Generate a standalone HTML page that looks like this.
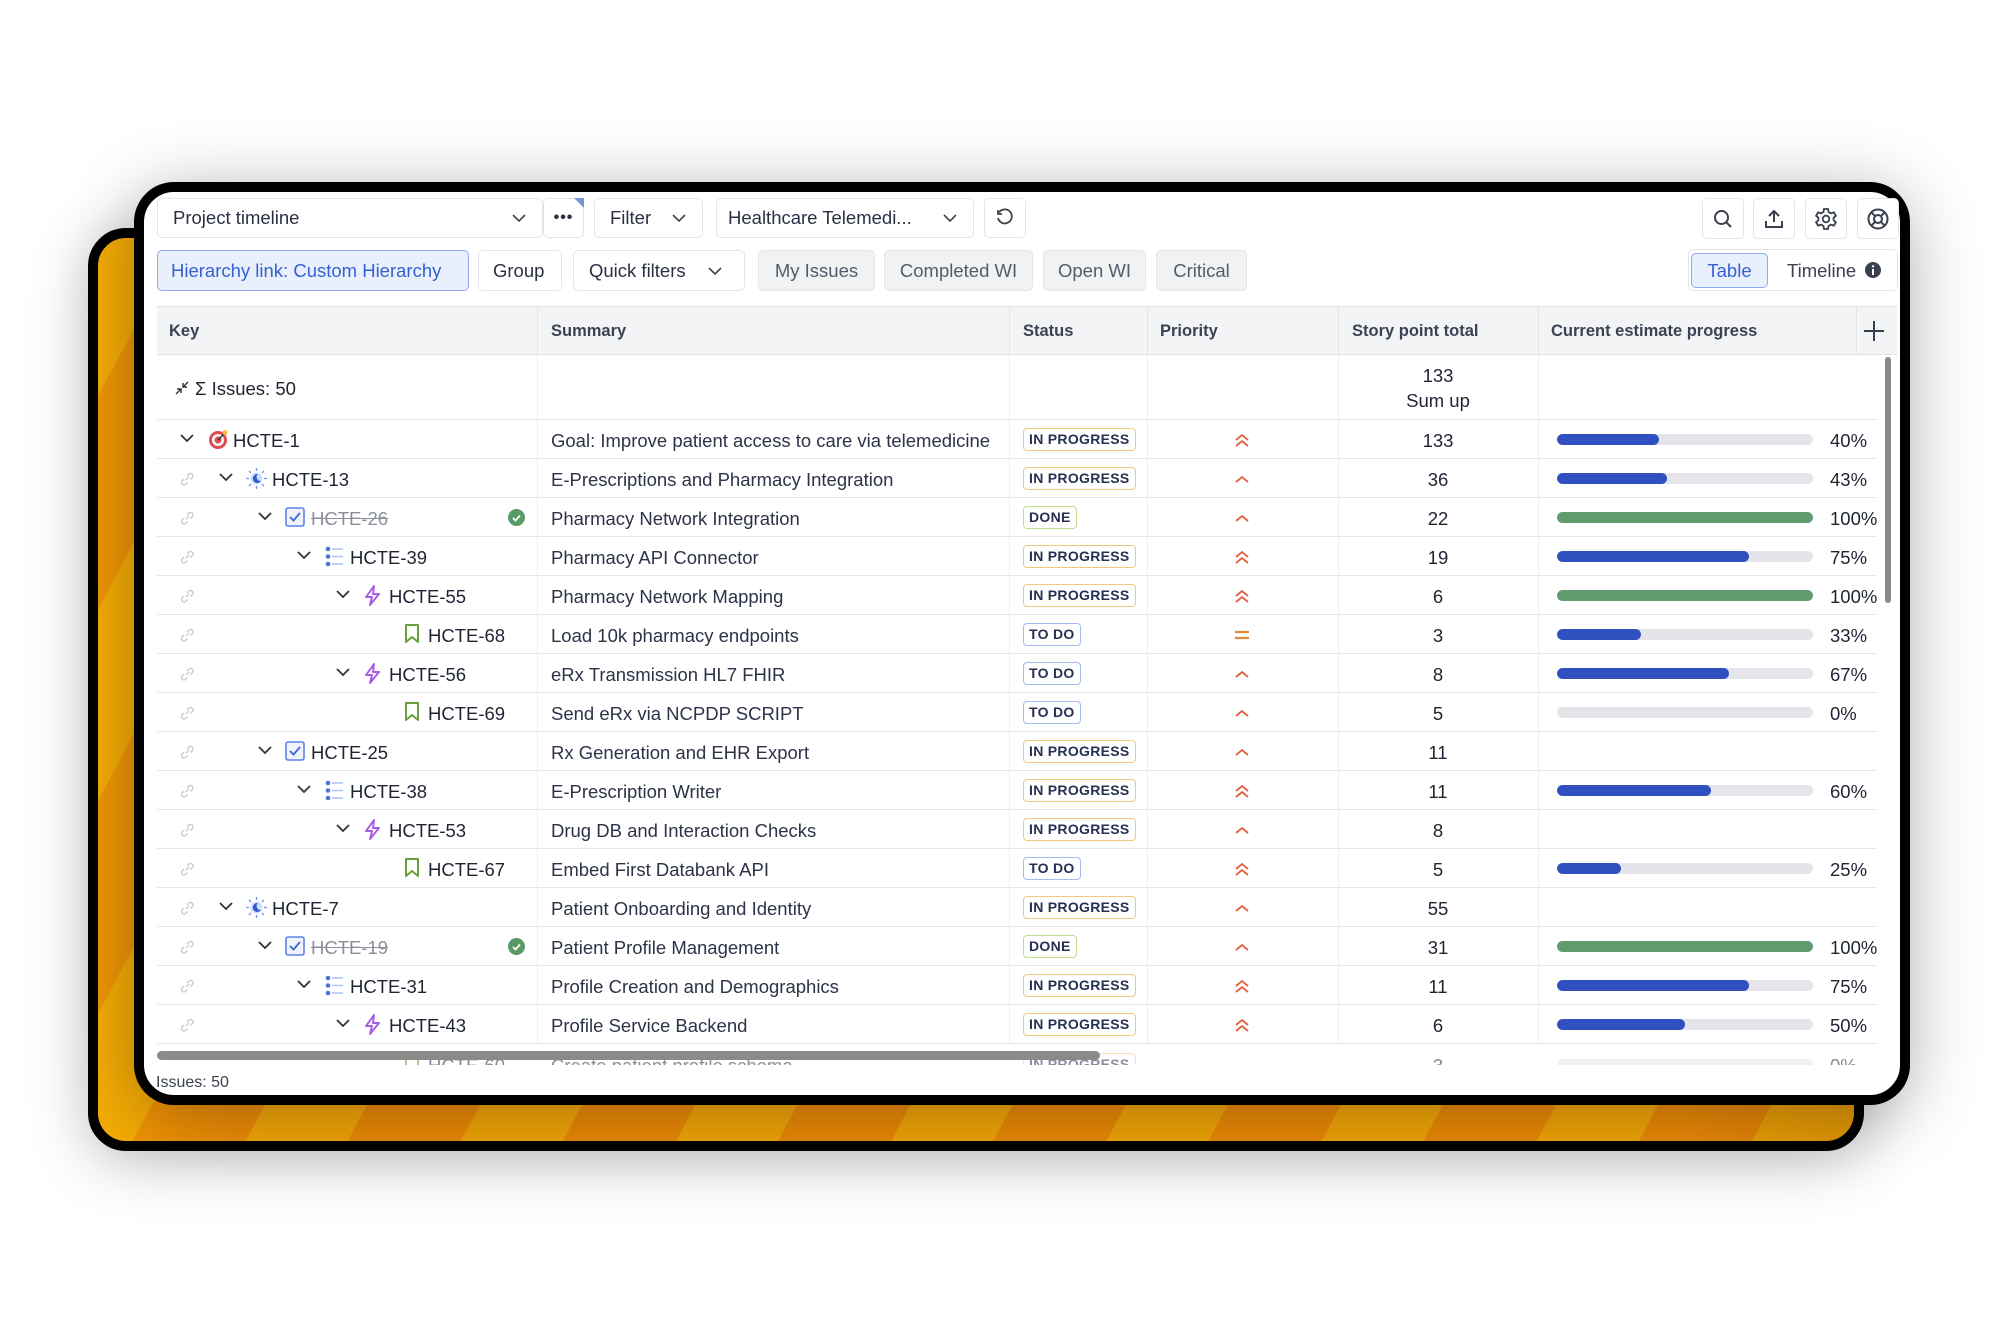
<!DOCTYPE html>
<html><head><meta charset="utf-8"><style>
*{box-sizing:border-box;margin:0;padding:0}
body{width:2000px;height:1334px;background:#fff;position:relative;overflow:hidden;font-family:"Liberation Sans",sans-serif;color:#1f2433}
.abs{position:absolute}
.back{left:88px;top:228px;width:1776px;height:923px;border:10px solid #000;border-radius:38px;overflow:hidden;
background:repeating-linear-gradient(-62deg,#f2a606 0 90px,#ec8a06 90px 190px);box-shadow:0 10px 60px rgba(0,0,0,.25)}
.back:after{content:"";position:absolute;inset:0;background:linear-gradient(90deg,rgba(255,200,0,.2),rgba(0,0,0,0) 10%,rgba(0,0,0,0) 90%,rgba(120,60,0,.15))}
.front{left:134px;top:182px;width:1776px;height:923px;border:10px solid #000;border-radius:40px;background:#fff;overflow:hidden;box-shadow:0 10px 70px rgba(0,0,0,.3)}
.btn{position:absolute;border:1px solid #e3e5ea;border-radius:5px;background:#fff;font-size:18.5px;color:#2a3043;display:flex;align-items:center;padding-left:15px}
.gbtn{background:#f1f2f4;color:#545b6b;justify-content:center;padding:0}
.hdr{position:absolute;left:157px;top:306px;width:1740px;height:49px;background:#f3f4f6;border-top:1px solid #e4e6ea;border-bottom:1px solid #e0e2e6;font-size:16.5px;font-weight:bold;color:#3b4254}
.hdr span{position:absolute;top:15px}
.vl{position:absolute;top:0;bottom:0;width:1px;background:#e3e5e9}
.r{position:absolute;left:157px;width:1720px;height:39px;border-bottom:1.5px solid #e6e7eb;font-size:18.5px}
.r>*{position:absolute}
.lk{left:22px;top:12px}
.cv{top:14px}
.ic{top:9px}
.k{top:10px;color:#1f2433}
.st{text-decoration:line-through;color:#8a8f9a}
.s{left:394px;top:10px;color:#2d3348}
.b{left:866px;top:8px;height:23px;border:1.5px solid;border-radius:4px;font-size:14px;font-weight:bold;color:#263052;padding:0 5px;line-height:20px;letter-spacing:.3px}
.ip{border-color:#f3c77c}.td{border-color:#a5bbef}.dn{border-color:#bcdc92}
.p{left:1077px;top:12px}
.n{left:1231px;width:100px;text-align:center;top:10px}
.bar{left:1400px;top:14px;width:256px;height:11px;border-radius:6px;background:#e4e4ea;overflow:hidden}
.bar i{display:block;height:100%;border-radius:6px;background:#3050bf}
.bar i.g{background:#619a6f}
.pc{left:1673px;top:10px}
.vlr{position:absolute;top:0;height:39px;width:1px;background:#eceef1}
</style></head><body>
<div class="abs back"></div>
<div class="abs front"></div>

<div class="btn" style="left:157px;top:198px;width:386px;height:40px">Project timeline
<svg class="abs" style="right:16px;top:15px" width="14" height="9"><path d="M1 1l6 6 6-6" fill="none" stroke="#444" stroke-width="1.6"/></svg></div>
<div class="btn" style="left:543px;top:198px;width:41px;height:40px;padding:0;justify-content:center;font-weight:bold;letter-spacing:1px;font-size:16px">•••
<svg class="abs" style="right:-1px;top:-1px" width="10" height="10"><path d="M0 0h10v10z" fill="#7a94d8"/></svg></div>
<div class="btn" style="left:594px;top:198px;width:109px;height:40px">Filter
<svg class="abs" style="right:16px;top:15px" width="14" height="9"><path d="M1 1l6 6 6-6" fill="none" stroke="#444" stroke-width="1.6"/></svg></div>
<div class="btn" style="left:716px;top:198px;width:258px;height:40px;padding-left:11px">Healthcare Telemedi...
<svg class="abs" style="right:16px;top:15px" width="14" height="9"><path d="M1 1l6 6 6-6" fill="none" stroke="#444" stroke-width="1.6"/></svg></div>
<div class="btn" style="left:984px;top:198px;width:42px;height:40px;padding:0;justify-content:center">
<svg width="20" height="20" viewBox="0 0 20 20"><path d="M4 4.5A7 7 0 1 1 3 10" fill="none" stroke="#444" stroke-width="1.8"/><path d="M3 2v4h4" fill="none" stroke="#444" stroke-width="1.8"/></svg></div>

<div class="btn" style="left:1702px;top:198px;width:42px;height:41px;padding:0;justify-content:center"><svg width="22" height="22"><circle cx="9.5" cy="9.5" r="6.5" fill="none" stroke="#3a4050" stroke-width="2"/><path d="M14 14l5 5" stroke="#3a4050" stroke-width="2"/></svg></div>
<div class="btn" style="left:1753px;top:198px;width:42px;height:41px;padding:0;justify-content:center"><svg width="22" height="22"><path d="M11 14V3M6 8l5-5 5 5M3 13v6h16v-6" fill="none" stroke="#3a4050" stroke-width="2"/></svg></div>
<div class="btn" style="left:1805px;top:198px;width:42px;height:41px;padding:0;justify-content:center"><svg width="24" height="24" viewBox="0 0 24 24"><path d="M10 2h4l.6 3 2.4 1.4 2.9-1 2 3.4-2.3 2v2.4l2.3 2-2 3.4-2.9-1L14.6 19 14 22h-4l-.6-3L7 17.6l-2.9 1-2-3.4 2.3-2v-2.4l-2.3-2 2-3.4 2.9 1L9.4 5z" fill="none" stroke="#3a4050" stroke-width="1.8"/><circle cx="12" cy="12" r="3.3" fill="none" stroke="#3a4050" stroke-width="1.8"/></svg></div>
<div class="btn" style="left:1857px;top:198px;width:42px;height:41px;padding:0;justify-content:center"><svg width="24" height="24" viewBox="0 0 24 24"><circle cx="12" cy="12" r="9.5" fill="none" stroke="#3a4050" stroke-width="2"/><circle cx="12" cy="12" r="4" fill="none" stroke="#3a4050" stroke-width="2"/><path d="M5.3 5.3l3.9 3.9M18.7 5.3l-3.9 3.9M5.3 18.7l3.9-3.9M18.7 18.7l-3.9-3.9" stroke="#3a4050" stroke-width="2"/></svg></div>

<div class="btn" style="left:157px;top:250px;width:312px;height:41px;background:#e9f0fd;border-color:#8eaaf0;color:#3560d0;padding-left:13px">Hierarchy link: Custom Hierarchy</div>
<div class="btn" style="left:478px;top:250px;width:84px;height:41px;padding-left:14px">Group</div>
<div class="btn" style="left:573px;top:250px;width:172px;height:41px;padding-left:15px">Quick filters
<svg class="abs" style="right:22px;top:16px" width="14" height="9"><path d="M1 1l6 6 6-6" fill="none" stroke="#444" stroke-width="1.6"/></svg></div>
<div class="btn gbtn" style="left:758px;top:250px;width:117px;height:41px">My Issues</div>
<div class="btn gbtn" style="left:884px;top:250px;width:149px;height:41px">Completed WI</div>
<div class="btn gbtn" style="left:1043px;top:250px;width:103px;height:41px">Open WI</div>
<div class="btn gbtn" style="left:1156px;top:250px;width:91px;height:41px">Critical</div>
<div class="btn" style="left:1688px;top:249px;width:210px;height:42px;padding:0"></div>
<div class="btn" style="left:1691px;top:253px;width:77px;height:35px;background:#e9f0fd;border-color:#8eaaf0;color:#3560d0;padding:0;justify-content:center">Table</div>
<div class="abs" style="left:1787px;top:260px;font-size:18.5px;color:#3a4050">Timeline</div>
<svg class="abs" style="left:1865px;top:262px" width="16" height="16"><circle cx="8" cy="8" r="8" fill="#3a4050"/><rect x="7" y="7" width="2" height="6" fill="#fff"/><circle cx="8" cy="4.3" r="1.2" fill="#fff"/></svg>

<div class="hdr">
<span style="left:12px">Key</span><span style="left:394px">Summary</span><span style="left:866px">Status</span><span style="left:1003px">Priority</span><span style="left:1195px">Story point total</span><span style="left:1394px">Current estimate progress</span>
<div class="vl" style="left:380px"></div><div class="vl" style="left:852px"></div><div class="vl" style="left:990px"></div><div class="vl" style="left:1181px"></div><div class="vl" style="left:1381px"></div><div class="vl" style="left:1699px"></div>
<svg class="abs" style="left:1705px;top:12px" width="24" height="24"><path d="M12 2v20M2 12h20" stroke="#3a4050" stroke-width="2"/></svg>
</div>

<div class="r" style="top:355px;height:65px">
<svg style="left:18px;top:26px" width="14" height="14"><path d="M1 13l5-5M2 8h4v4M13 1L8 6M8 2v4h4" fill="none" stroke="#333" stroke-width="1.4"/></svg>
<span style="left:38px;top:23px">Σ Issues: 50</span>
<span style="left:1231px;width:100px;text-align:center;top:10px">133</span>
<span style="left:1231px;width:100px;text-align:center;top:35px">Sum up</span>
<div class="vlr" style="left:380px;height:65px"></div><div class="vlr" style="left:852px;height:65px"></div><div class="vlr" style="left:990px;height:65px"></div><div class="vlr" style="left:1181px;height:65px"></div><div class="vlr" style="left:1381px;height:65px"></div>
</div>

<div class="r" style="top:420px">
<div class="vlr" style="left:380px"></div><div class="vlr" style="left:852px"></div><div class="vlr" style="left:990px"></div><div class="vlr" style="left:1181px"></div><div class="vlr" style="left:1381px"></div>
<svg class="cv" style="left:23px" width="14" height="9"><path d="M1 1l6 6 6-6" fill="none" stroke="#333" stroke-width="1.8"/></svg>
<svg class="ic" style="left:51px" width="21" height="21"><circle cx="10" cy="11" r="9" fill="#e04a55"/><circle cx="10" cy="11" r="6" fill="#fff"/><circle cx="10" cy="11" r="3.5" fill="#e04a55"/><path d="M10 11l7-7" stroke="#333" stroke-width="1.5"/><circle cx="17" cy="3.5" r="2.5" fill="#f5c040"/></svg>
<span class="k" style="left:76px">HCTE-1</span>
<span class="s">Goal: Improve patient access to care via telemedicine</span>
<span class="b ip">IN PROGRESS</span>
<svg class="p" width="16" height="16"><path d="M2 8l6-5 6 5M2 14l6-5 6 5" fill="none" stroke="#e0603f" stroke-width="1.8"/></svg>
<span class="n">133</span><div class="bar"><i style="width:40%"></i></div><span class="pc">40%</span>
</div>

<div class="r" style="top:459px">
<div class="vlr" style="left:380px"></div><div class="vlr" style="left:852px"></div><div class="vlr" style="left:990px"></div><div class="vlr" style="left:1181px"></div><div class="vlr" style="left:1381px"></div>
<svg class="lk" width="16" height="16"><path d="M7 9l3-3M5 8l-2 2a2.5 2.5 0 0 0 3.5 3.5L8.5 11.5M8 5l2-2a2.5 2.5 0 0 1 3.5 3.5L11.5 8.5" fill="none" stroke="#c8cbd2" stroke-width="1.4"/></svg>
<svg class="cv" style="left:62px" width="14" height="9"><path d="M1 1l6 6 6-6" fill="none" stroke="#333" stroke-width="1.8"/></svg>
<svg class="ic" style="left:89px" width="21" height="21"><circle cx="10.5" cy="10.5" r="6" fill="#cfe0fb"/><path d="M12 6a4.5 4.5 0 1 0 3 7 4 4 0 0 1-3-7z" fill="#2f5bd0"/><g stroke="#6d94e6" stroke-width="1.3"><path d="M10.5 0v3M10.5 18v3M0 10.5h3M18 10.5h3M3 3l2 2M16 16l2 2M3 18l2-2M16 5l2-2"/></g></svg>
<span class="k" style="left:115px">HCTE-13</span>
<span class="s">E-Prescriptions and Pharmacy Integration</span>
<span class="b ip">IN PROGRESS</span>
<svg class="p" width="16" height="16"><path d="M2 11l6-5 6 5" fill="none" stroke="#e0603f" stroke-width="1.8"/></svg>
<span class="n">36</span><div class="bar"><i style="width:43%"></i></div><span class="pc">43%</span>
</div>

<div class="r" style="top:498px">
<div class="vlr" style="left:380px"></div><div class="vlr" style="left:852px"></div><div class="vlr" style="left:990px"></div><div class="vlr" style="left:1181px"></div><div class="vlr" style="left:1381px"></div>
<svg class="lk" width="16" height="16"><path d="M7 9l3-3M5 8l-2 2a2.5 2.5 0 0 0 3.5 3.5L8.5 11.5M8 5l2-2a2.5 2.5 0 0 1 3.5 3.5L11.5 8.5" fill="none" stroke="#c8cbd2" stroke-width="1.4"/></svg>
<svg class="cv" style="left:101px" width="14" height="9"><path d="M1 1l6 6 6-6" fill="none" stroke="#333" stroke-width="1.8"/></svg>
<svg class="ic" style="left:128px" width="20" height="20"><rect x="1" y="1" width="18" height="18" rx="2" fill="#eef3fd" stroke="#5b84e6" stroke-width="1.6"/><path d="M5 10l3.5 3.5L15 6" fill="none" stroke="#3c68d8" stroke-width="1.8"/></svg>
<span class="k st" style="left:154px">HCTE-26</span>
<svg style="left:351px;top:11px" width="17" height="17"><circle cx="8.5" cy="8.5" r="8.5" fill="#5a9a66"/><path d="M5 9l2.5 2.5L12 6.5" fill="none" stroke="#fff" stroke-width="1.8"/></svg>
<span class="s">Pharmacy Network Integration</span>
<span class="b dn">DONE</span>
<svg class="p" width="16" height="16"><path d="M2 11l6-5 6 5" fill="none" stroke="#e0603f" stroke-width="1.8"/></svg>
<span class="n">22</span><div class="bar"><i class="g" style="width:100%"></i></div><span class="pc">100%</span>
</div>

<div class="r" style="top:537px">
<div class="vlr" style="left:380px"></div><div class="vlr" style="left:852px"></div><div class="vlr" style="left:990px"></div><div class="vlr" style="left:1181px"></div><div class="vlr" style="left:1381px"></div>
<svg class="lk" width="16" height="16"><path d="M7 9l3-3M5 8l-2 2a2.5 2.5 0 0 0 3.5 3.5L8.5 11.5M8 5l2-2a2.5 2.5 0 0 1 3.5 3.5L11.5 8.5" fill="none" stroke="#c8cbd2" stroke-width="1.4"/></svg>
<svg class="cv" style="left:140px" width="14" height="9"><path d="M1 1l6 6 6-6" fill="none" stroke="#333" stroke-width="1.8"/></svg>
<svg class="ic" style="left:167px" width="20" height="21"><g fill="#4a74d8"><circle cx="4" cy="3" r="2.3"/><circle cx="4" cy="10.5" r="2.3"/><circle cx="4" cy="18" r="2.3"/></g><g stroke="#a9c2f2" stroke-width="1.6"><path d="M8 3h11M8 10.5h11M8 18h11"/></g></svg>
<span class="k" style="left:193px">HCTE-39</span>
<span class="s">Pharmacy API Connector</span>
<span class="b ip">IN PROGRESS</span>
<svg class="p" width="16" height="16"><path d="M2 8l6-5 6 5M2 14l6-5 6 5" fill="none" stroke="#e0603f" stroke-width="1.8"/></svg>
<span class="n">19</span><div class="bar"><i style="width:75%"></i></div><span class="pc">75%</span>
</div>

<div class="r" style="top:576px">
<div class="vlr" style="left:380px"></div><div class="vlr" style="left:852px"></div><div class="vlr" style="left:990px"></div><div class="vlr" style="left:1181px"></div><div class="vlr" style="left:1381px"></div>
<svg class="lk" width="16" height="16"><path d="M7 9l3-3M5 8l-2 2a2.5 2.5 0 0 0 3.5 3.5L8.5 11.5M8 5l2-2a2.5 2.5 0 0 1 3.5 3.5L11.5 8.5" fill="none" stroke="#c8cbd2" stroke-width="1.4"/></svg>
<svg class="cv" style="left:179px" width="14" height="9"><path d="M1 1l6 6 6-6" fill="none" stroke="#333" stroke-width="1.8"/></svg>
<svg class="ic" style="left:206px" width="20" height="21"><path d="M11 1L3 12h6l-2 8 9-11h-6z" fill="none" stroke="#a55ae8" stroke-width="1.9" stroke-linejoin="round"/></svg>
<span class="k" style="left:232px">HCTE-55</span>
<span class="s">Pharmacy Network Mapping</span>
<span class="b ip">IN PROGRESS</span>
<svg class="p" width="16" height="16"><path d="M2 8l6-5 6 5M2 14l6-5 6 5" fill="none" stroke="#e0603f" stroke-width="1.8"/></svg>
<span class="n">6</span><div class="bar"><i class="g" style="width:100%"></i></div><span class="pc">100%</span>
</div>

<div class="r" style="top:615px">
<div class="vlr" style="left:380px"></div><div class="vlr" style="left:852px"></div><div class="vlr" style="left:990px"></div><div class="vlr" style="left:1181px"></div><div class="vlr" style="left:1381px"></div>
<svg class="lk" width="16" height="16"><path d="M7 9l3-3M5 8l-2 2a2.5 2.5 0 0 0 3.5 3.5L8.5 11.5M8 5l2-2a2.5 2.5 0 0 1 3.5 3.5L11.5 8.5" fill="none" stroke="#c8cbd2" stroke-width="1.4"/></svg>
<svg class="ic" style="left:247px" width="16" height="20"><path d="M2 1h12v17l-6-5-6 5z" fill="none" stroke="#6aa03c" stroke-width="2" stroke-linejoin="round"/></svg>
<span class="k" style="left:271px">HCTE-68</span>
<span class="s">Load 10k pharmacy endpoints</span>
<span class="b td">TO DO</span>
<svg class="p" width="16" height="16"><path d="M1 5h14M1 11h14" stroke="#e08a3c" stroke-width="2.2"/></svg>
<span class="n">3</span><div class="bar"><i style="width:33%"></i></div><span class="pc">33%</span>
</div>

<div class="r" style="top:654px">
<div class="vlr" style="left:380px"></div><div class="vlr" style="left:852px"></div><div class="vlr" style="left:990px"></div><div class="vlr" style="left:1181px"></div><div class="vlr" style="left:1381px"></div>
<svg class="lk" width="16" height="16"><path d="M7 9l3-3M5 8l-2 2a2.5 2.5 0 0 0 3.5 3.5L8.5 11.5M8 5l2-2a2.5 2.5 0 0 1 3.5 3.5L11.5 8.5" fill="none" stroke="#c8cbd2" stroke-width="1.4"/></svg>
<svg class="cv" style="left:179px" width="14" height="9"><path d="M1 1l6 6 6-6" fill="none" stroke="#333" stroke-width="1.8"/></svg>
<svg class="ic" style="left:206px" width="20" height="21"><path d="M11 1L3 12h6l-2 8 9-11h-6z" fill="none" stroke="#a55ae8" stroke-width="1.9" stroke-linejoin="round"/></svg>
<span class="k" style="left:232px">HCTE-56</span>
<span class="s">eRx Transmission HL7 FHIR</span>
<span class="b td">TO DO</span>
<svg class="p" width="16" height="16"><path d="M2 11l6-5 6 5" fill="none" stroke="#e0603f" stroke-width="1.8"/></svg>
<span class="n">8</span><div class="bar"><i style="width:67%"></i></div><span class="pc">67%</span>
</div>

<div class="r" style="top:693px">
<div class="vlr" style="left:380px"></div><div class="vlr" style="left:852px"></div><div class="vlr" style="left:990px"></div><div class="vlr" style="left:1181px"></div><div class="vlr" style="left:1381px"></div>
<svg class="lk" width="16" height="16"><path d="M7 9l3-3M5 8l-2 2a2.5 2.5 0 0 0 3.5 3.5L8.5 11.5M8 5l2-2a2.5 2.5 0 0 1 3.5 3.5L11.5 8.5" fill="none" stroke="#c8cbd2" stroke-width="1.4"/></svg>
<svg class="ic" style="left:247px" width="16" height="20"><path d="M2 1h12v17l-6-5-6 5z" fill="none" stroke="#6aa03c" stroke-width="2" stroke-linejoin="round"/></svg>
<span class="k" style="left:271px">HCTE-69</span>
<span class="s">Send eRx via NCPDP SCRIPT</span>
<span class="b td">TO DO</span>
<svg class="p" width="16" height="16"><path d="M2 11l6-5 6 5" fill="none" stroke="#e0603f" stroke-width="1.8"/></svg>
<span class="n">5</span><div class="bar"></div><span class="pc">0%</span>
</div>

<div class="r" style="top:732px">
<div class="vlr" style="left:380px"></div><div class="vlr" style="left:852px"></div><div class="vlr" style="left:990px"></div><div class="vlr" style="left:1181px"></div><div class="vlr" style="left:1381px"></div>
<svg class="lk" width="16" height="16"><path d="M7 9l3-3M5 8l-2 2a2.5 2.5 0 0 0 3.5 3.5L8.5 11.5M8 5l2-2a2.5 2.5 0 0 1 3.5 3.5L11.5 8.5" fill="none" stroke="#c8cbd2" stroke-width="1.4"/></svg>
<svg class="cv" style="left:101px" width="14" height="9"><path d="M1 1l6 6 6-6" fill="none" stroke="#333" stroke-width="1.8"/></svg>
<svg class="ic" style="left:128px" width="20" height="20"><rect x="1" y="1" width="18" height="18" rx="2" fill="#eef3fd" stroke="#5b84e6" stroke-width="1.6"/><path d="M5 10l3.5 3.5L15 6" fill="none" stroke="#3c68d8" stroke-width="1.8"/></svg>
<span class="k" style="left:154px">HCTE-25</span>
<span class="s">Rx Generation and EHR Export</span>
<span class="b ip">IN PROGRESS</span>
<svg class="p" width="16" height="16"><path d="M2 11l6-5 6 5" fill="none" stroke="#e0603f" stroke-width="1.8"/></svg>
<span class="n">11</span>
</div>

<div class="r" style="top:771px">
<div class="vlr" style="left:380px"></div><div class="vlr" style="left:852px"></div><div class="vlr" style="left:990px"></div><div class="vlr" style="left:1181px"></div><div class="vlr" style="left:1381px"></div>
<svg class="lk" width="16" height="16"><path d="M7 9l3-3M5 8l-2 2a2.5 2.5 0 0 0 3.5 3.5L8.5 11.5M8 5l2-2a2.5 2.5 0 0 1 3.5 3.5L11.5 8.5" fill="none" stroke="#c8cbd2" stroke-width="1.4"/></svg>
<svg class="cv" style="left:140px" width="14" height="9"><path d="M1 1l6 6 6-6" fill="none" stroke="#333" stroke-width="1.8"/></svg>
<svg class="ic" style="left:167px" width="20" height="21"><g fill="#4a74d8"><circle cx="4" cy="3" r="2.3"/><circle cx="4" cy="10.5" r="2.3"/><circle cx="4" cy="18" r="2.3"/></g><g stroke="#a9c2f2" stroke-width="1.6"><path d="M8 3h11M8 10.5h11M8 18h11"/></g></svg>
<span class="k" style="left:193px">HCTE-38</span>
<span class="s">E-Prescription Writer</span>
<span class="b ip">IN PROGRESS</span>
<svg class="p" width="16" height="16"><path d="M2 8l6-5 6 5M2 14l6-5 6 5" fill="none" stroke="#e0603f" stroke-width="1.8"/></svg>
<span class="n">11</span><div class="bar"><i style="width:60%"></i></div><span class="pc">60%</span>
</div>

<div class="r" style="top:810px">
<div class="vlr" style="left:380px"></div><div class="vlr" style="left:852px"></div><div class="vlr" style="left:990px"></div><div class="vlr" style="left:1181px"></div><div class="vlr" style="left:1381px"></div>
<svg class="lk" width="16" height="16"><path d="M7 9l3-3M5 8l-2 2a2.5 2.5 0 0 0 3.5 3.5L8.5 11.5M8 5l2-2a2.5 2.5 0 0 1 3.5 3.5L11.5 8.5" fill="none" stroke="#c8cbd2" stroke-width="1.4"/></svg>
<svg class="cv" style="left:179px" width="14" height="9"><path d="M1 1l6 6 6-6" fill="none" stroke="#333" stroke-width="1.8"/></svg>
<svg class="ic" style="left:206px" width="20" height="21"><path d="M11 1L3 12h6l-2 8 9-11h-6z" fill="none" stroke="#a55ae8" stroke-width="1.9" stroke-linejoin="round"/></svg>
<span class="k" style="left:232px">HCTE-53</span>
<span class="s">Drug DB and Interaction Checks</span>
<span class="b ip">IN PROGRESS</span>
<svg class="p" width="16" height="16"><path d="M2 11l6-5 6 5" fill="none" stroke="#e0603f" stroke-width="1.8"/></svg>
<span class="n">8</span>
</div>

<div class="r" style="top:849px">
<div class="vlr" style="left:380px"></div><div class="vlr" style="left:852px"></div><div class="vlr" style="left:990px"></div><div class="vlr" style="left:1181px"></div><div class="vlr" style="left:1381px"></div>
<svg class="lk" width="16" height="16"><path d="M7 9l3-3M5 8l-2 2a2.5 2.5 0 0 0 3.5 3.5L8.5 11.5M8 5l2-2a2.5 2.5 0 0 1 3.5 3.5L11.5 8.5" fill="none" stroke="#c8cbd2" stroke-width="1.4"/></svg>
<svg class="ic" style="left:247px" width="16" height="20"><path d="M2 1h12v17l-6-5-6 5z" fill="none" stroke="#6aa03c" stroke-width="2" stroke-linejoin="round"/></svg>
<span class="k" style="left:271px">HCTE-67</span>
<span class="s">Embed First Databank API</span>
<span class="b td">TO DO</span>
<svg class="p" width="16" height="16"><path d="M2 8l6-5 6 5M2 14l6-5 6 5" fill="none" stroke="#e0603f" stroke-width="1.8"/></svg>
<span class="n">5</span><div class="bar"><i style="width:25%"></i></div><span class="pc">25%</span>
</div>

<div class="r" style="top:888px">
<div class="vlr" style="left:380px"></div><div class="vlr" style="left:852px"></div><div class="vlr" style="left:990px"></div><div class="vlr" style="left:1181px"></div><div class="vlr" style="left:1381px"></div>
<svg class="lk" width="16" height="16"><path d="M7 9l3-3M5 8l-2 2a2.5 2.5 0 0 0 3.5 3.5L8.5 11.5M8 5l2-2a2.5 2.5 0 0 1 3.5 3.5L11.5 8.5" fill="none" stroke="#c8cbd2" stroke-width="1.4"/></svg>
<svg class="cv" style="left:62px" width="14" height="9"><path d="M1 1l6 6 6-6" fill="none" stroke="#333" stroke-width="1.8"/></svg>
<svg class="ic" style="left:89px" width="21" height="21"><circle cx="10.5" cy="10.5" r="6" fill="#cfe0fb"/><path d="M12 6a4.5 4.5 0 1 0 3 7 4 4 0 0 1-3-7z" fill="#2f5bd0"/><g stroke="#6d94e6" stroke-width="1.3"><path d="M10.5 0v3M10.5 18v3M0 10.5h3M18 10.5h3M3 3l2 2M16 16l2 2M3 18l2-2M16 5l2-2"/></g></svg>
<span class="k" style="left:115px">HCTE-7</span>
<span class="s">Patient Onboarding and Identity</span>
<span class="b ip">IN PROGRESS</span>
<svg class="p" width="16" height="16"><path d="M2 11l6-5 6 5" fill="none" stroke="#e0603f" stroke-width="1.8"/></svg>
<span class="n">55</span>
</div>

<div class="r" style="top:927px">
<div class="vlr" style="left:380px"></div><div class="vlr" style="left:852px"></div><div class="vlr" style="left:990px"></div><div class="vlr" style="left:1181px"></div><div class="vlr" style="left:1381px"></div>
<svg class="lk" width="16" height="16"><path d="M7 9l3-3M5 8l-2 2a2.5 2.5 0 0 0 3.5 3.5L8.5 11.5M8 5l2-2a2.5 2.5 0 0 1 3.5 3.5L11.5 8.5" fill="none" stroke="#c8cbd2" stroke-width="1.4"/></svg>
<svg class="cv" style="left:101px" width="14" height="9"><path d="M1 1l6 6 6-6" fill="none" stroke="#333" stroke-width="1.8"/></svg>
<svg class="ic" style="left:128px" width="20" height="20"><rect x="1" y="1" width="18" height="18" rx="2" fill="#eef3fd" stroke="#5b84e6" stroke-width="1.6"/><path d="M5 10l3.5 3.5L15 6" fill="none" stroke="#3c68d8" stroke-width="1.8"/></svg>
<span class="k st" style="left:154px">HCTE-19</span>
<svg style="left:351px;top:11px" width="17" height="17"><circle cx="8.5" cy="8.5" r="8.5" fill="#5a9a66"/><path d="M5 9l2.5 2.5L12 6.5" fill="none" stroke="#fff" stroke-width="1.8"/></svg>
<span class="s">Patient Profile Management</span>
<span class="b dn">DONE</span>
<svg class="p" width="16" height="16"><path d="M2 11l6-5 6 5" fill="none" stroke="#e0603f" stroke-width="1.8"/></svg>
<span class="n">31</span><div class="bar"><i class="g" style="width:100%"></i></div><span class="pc">100%</span>
</div>

<div class="r" style="top:966px">
<div class="vlr" style="left:380px"></div><div class="vlr" style="left:852px"></div><div class="vlr" style="left:990px"></div><div class="vlr" style="left:1181px"></div><div class="vlr" style="left:1381px"></div>
<svg class="lk" width="16" height="16"><path d="M7 9l3-3M5 8l-2 2a2.5 2.5 0 0 0 3.5 3.5L8.5 11.5M8 5l2-2a2.5 2.5 0 0 1 3.5 3.5L11.5 8.5" fill="none" stroke="#c8cbd2" stroke-width="1.4"/></svg>
<svg class="cv" style="left:140px" width="14" height="9"><path d="M1 1l6 6 6-6" fill="none" stroke="#333" stroke-width="1.8"/></svg>
<svg class="ic" style="left:167px" width="20" height="21"><g fill="#4a74d8"><circle cx="4" cy="3" r="2.3"/><circle cx="4" cy="10.5" r="2.3"/><circle cx="4" cy="18" r="2.3"/></g><g stroke="#a9c2f2" stroke-width="1.6"><path d="M8 3h11M8 10.5h11M8 18h11"/></g></svg>
<span class="k" style="left:193px">HCTE-31</span>
<span class="s">Profile Creation and Demographics</span>
<span class="b ip">IN PROGRESS</span>
<svg class="p" width="16" height="16"><path d="M2 8l6-5 6 5M2 14l6-5 6 5" fill="none" stroke="#e0603f" stroke-width="1.8"/></svg>
<span class="n">11</span><div class="bar"><i style="width:75%"></i></div><span class="pc">75%</span>
</div>

<div class="r" style="top:1005px">
<div class="vlr" style="left:380px"></div><div class="vlr" style="left:852px"></div><div class="vlr" style="left:990px"></div><div class="vlr" style="left:1181px"></div><div class="vlr" style="left:1381px"></div>
<svg class="lk" width="16" height="16"><path d="M7 9l3-3M5 8l-2 2a2.5 2.5 0 0 0 3.5 3.5L8.5 11.5M8 5l2-2a2.5 2.5 0 0 1 3.5 3.5L11.5 8.5" fill="none" stroke="#c8cbd2" stroke-width="1.4"/></svg>
<svg class="cv" style="left:179px" width="14" height="9"><path d="M1 1l6 6 6-6" fill="none" stroke="#333" stroke-width="1.8"/></svg>
<svg class="ic" style="left:206px" width="20" height="21"><path d="M11 1L3 12h6l-2 8 9-11h-6z" fill="none" stroke="#a55ae8" stroke-width="1.9" stroke-linejoin="round"/></svg>
<span class="k" style="left:232px">HCTE-43</span>
<span class="s">Profile Service Backend</span>
<span class="b ip">IN PROGRESS</span>
<svg class="p" width="16" height="16"><path d="M2 8l6-5 6 5M2 14l6-5 6 5" fill="none" stroke="#e0603f" stroke-width="1.8"/></svg>
<span class="n">6</span><div class="bar"><i style="width:50%"></i></div><span class="pc">50%</span>
</div>

<div class="abs" style="left:157px;top:1047px;width:1720px;height:18px;overflow:hidden">
<div class="r" style="left:0;top:-2px;opacity:.55">
<svg class="ic" style="left:247px" width="16" height="20"><path d="M2 1h12v17l-6-5-6 5z" fill="none" stroke="#6aa03c" stroke-width="2"/></svg>
<span class="k" style="left:271px">HCTE-60</span>
<span class="s">Create patient profile schema</span>
<span class="b ip">IN PROGRESS</span>
<span class="n">3</span><div class="bar"></div><span class="pc">0%</span>
</div></div>
<div class="abs" style="left:157px;top:1051px;width:943px;height:9px;border-radius:5px;background:#8a8a8a"></div>
<div class="abs" style="left:1885px;top:357px;width:6px;height:246px;border-radius:3px;background:#8a8a8a"></div>
<div class="abs" style="left:156px;top:1074px;font-size:16px;color:#3a4050">Issues: 50</div>
</body></html>
